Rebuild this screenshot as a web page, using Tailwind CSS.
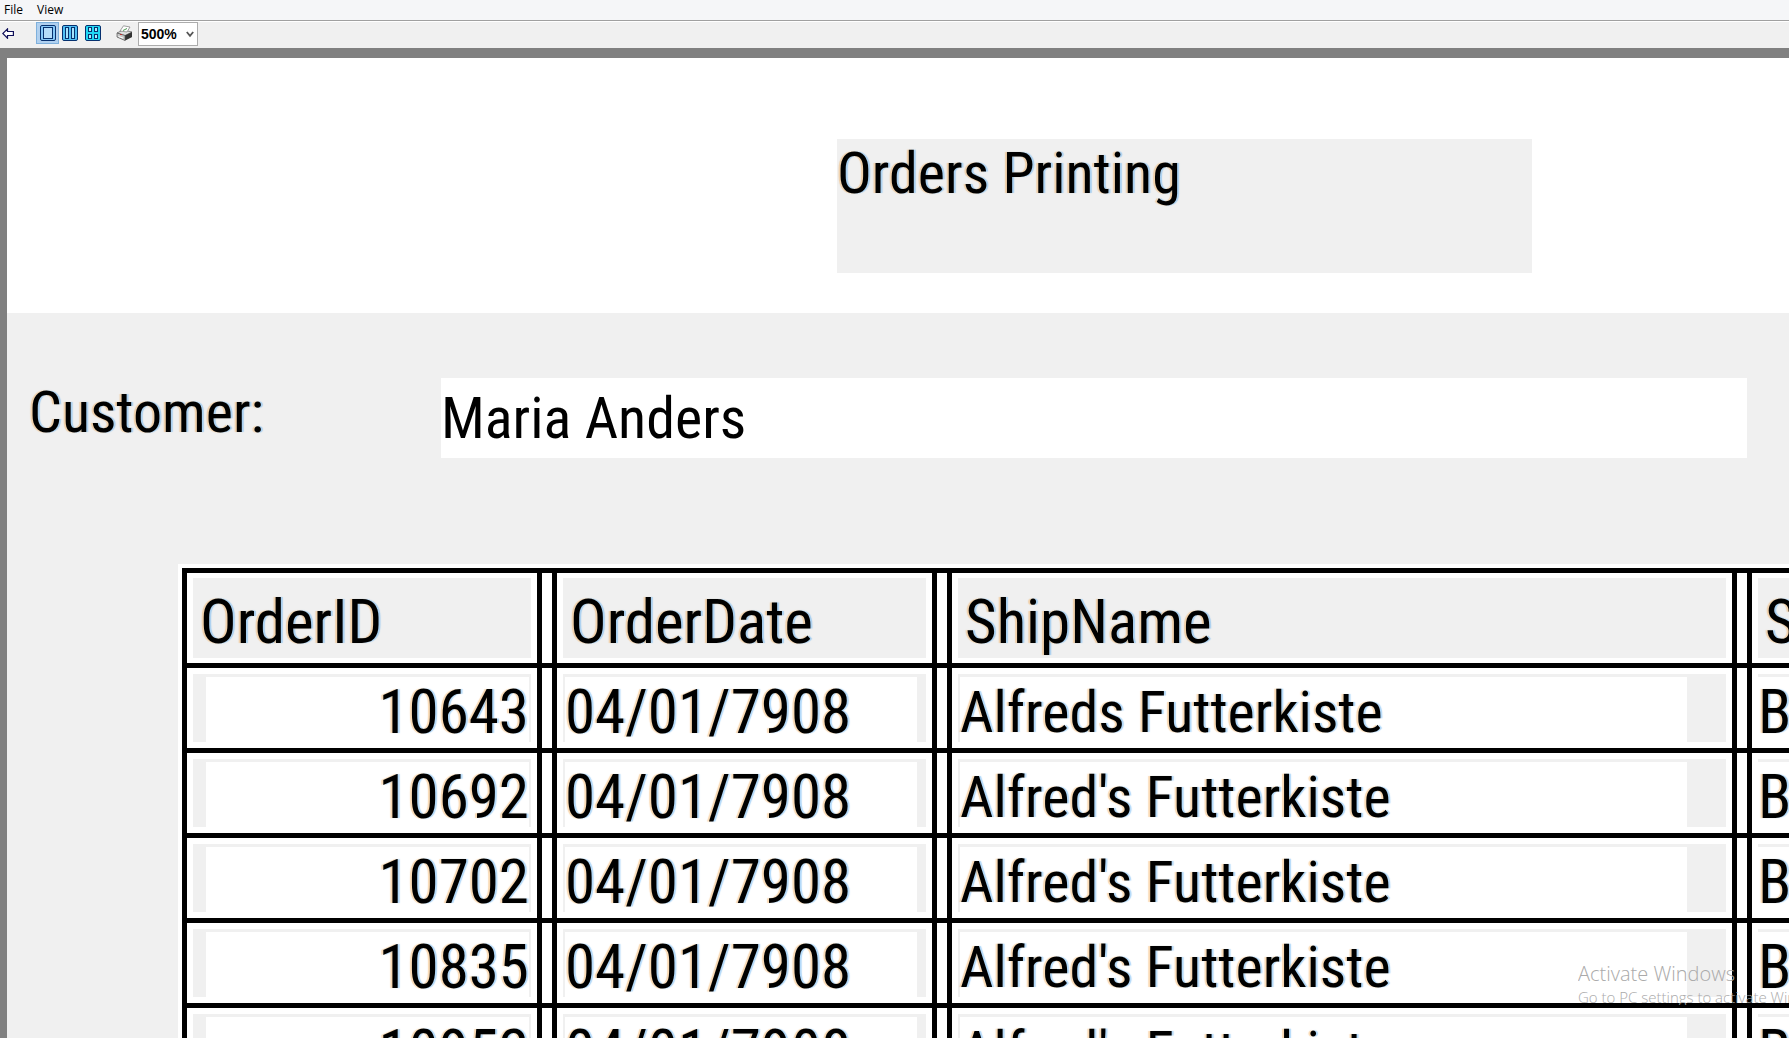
<!DOCTYPE html>
<html lang="en">
<head>
<meta charset="utf-8">
<title>Print Preview</title>
<script src="https://cdn.jsdelivr.net/npm/@tailwindcss/browser@4"></script>
</head>
<body class="flex h-screen flex-col overflow-hidden bg-[#808080] font-['Open_Sans',sans-serif] text-black">
<nav class="flex h-5 shrink-0 items-center gap-[14px] bg-[#f5f6f8] pl-1 text-[12px] leading-5">
  <button class="h-5">File</button>
  <button class="h-5">View</button>
</nav>
<header class="flex h-7 shrink-0 items-start border-t border-[#a0a0a0] bg-[#f0f0f0] pt-px shadow-[inset_0_1px_0_#fff]">
  <button aria-label="Back" class="mr-5 flex h-[22px] w-4 items-center justify-center">
    <svg width="12" height="11" viewBox="0 0 12 11" fill="#fff" stroke="#10105a" stroke-width="1.200"><path d="M5.500.800.800 5.500l4.700 4.700V7.500H11.400V3.500H5.500z"/></svg>
  </button>
  <button aria-label="One page" class="flex h-[22px] w-[23px] items-center justify-center border border-[#7eb0dc] bg-[#b0d0ef]">
    <svg width="16" height="16" viewBox="0 0 16 16" fill="#86c8f8" stroke="#06306e"><rect x=".5" y=".5" width="15" height="15" rx="1.500"/><rect x="3.500" y="2.500" width="9" height="11" fill="#b4dcfa"/></svg>
  </button>
  <button aria-label="Two pages" class="flex h-[22px] w-[22px] items-center justify-center">
    <svg width="16" height="16" viewBox="0 0 16 16" fill="#50c0f4" stroke="#06306e"><rect x=".5" y=".5" width="15" height="15" rx="1.500"/><rect x="3.500" y="2.500" width="3" height="11" fill="#a6e4fc"/><rect x="9.500" y="2.500" width="3" height="11" fill="#a6e4fc"/></svg>
  </button>
  <button aria-label="Four pages" class="flex h-[22px] w-[24px] items-center justify-center">
    <svg width="16" height="16" viewBox="0 0 16 16" fill="#20d8f4" stroke="#06306e"><rect x=".5" y=".5" width="15" height="15" rx="1.500"/><rect x="3.500" y="2.500" width="3" height="4" fill="#a6f0fc"/><rect x="9.500" y="2.500" width="3" height="4" fill="#a6f0fc"/><rect x="3.500" y="9.500" width="3" height="4" fill="#a6f0fc"/><rect x="9.500" y="9.500" width="3" height="4" fill="#a6f0fc"/></svg>
  </button>
  <button aria-label="Print" class="ml-[7px] flex h-[22px] w-6 items-center justify-center">
    <svg width="17" height="16" viewBox="0 0 17 16"><path d="M1 8 7 5l9 2v5l-7 3.500L1 12z" fill="#8a8a8a"/><path d="M1 8l6-3 9 2-7 3.500z" fill="#e0e0e0" stroke="#666" stroke-width=".7"/><path d="M9 10.500 16 7v5l-7 3.500z" fill="#333"/><path d="M1 8l8 2.500v5L1 12z" fill="#c8c8c8" stroke="#555" stroke-width=".7"/><path d="M4 6 7.500.8 14 2l-3 5z" fill="#fff" stroke="#888" stroke-width=".8"/><path d="M7 5.500l4-2" stroke="#4a9a50"/><path d="M4 9.500h2" stroke="#b33"/><path d="M2.500 11.500 7 13" stroke="#fff"/></svg>
  </button>
  <div class="relative ml-[2px]">
    <select aria-label="Zoom" class="block h-6 w-[60px] appearance-none border border-[#acacac] bg-white pl-[2px] font-['Liberation_Sans',sans-serif] text-[14px] leading-5 font-bold"><option>500%</option></select>
    <svg class="pointer-events-none absolute top-[9px] right-1" width="8" height="7" viewBox="0 0 8 7" fill="none" stroke="#555" stroke-width="1.800"><path d="M.8 1 4 4.800 7.200 1"/></svg>
  </div>
</header>
<main class="mt-[10px] ml-[7px] min-h-0 flex-1 overflow-hidden bg-[#f0f0f0] font-['Roboto_Condensed','Liberation_Sans',sans-serif] text-[58px] leading-[68px] [text-shadow:-2px_0_1px_#f0a04066,2px_0_1px_#40a0f066]">
  <div class="h-[255px] bg-white pt-[81px]">
    <h1 class="ml-[830px] h-[134px] w-[695px] bg-[#f0f0f0] font-normal">Orders Printing</h1>
  </div>
  <div class="flex h-[255px] items-start pt-[65px]">
    <label for="customer" class="w-[434px] shrink-0 pl-[22px]">Customer:</label>
    <input id="customer" value="Maria Anders" class="h-20 w-[1306px] shrink-0 bg-white">
  </div>
  <table class="ml-[175px] w-[2165px] table-fixed border-separate border-spacing-0 bg-white text-left shadow-[0_0_0_4px_#fff]">
    <colgroup><col class="w-[370px]"><col class="w-[395px]"><col class="w-[800px]"><col class="w-[600px]"></colgroup>
    <thead class="text-[61px] leading-[68px]"><tr id="head"></tr></thead>
    <tbody id="rows"></tbody>
  </table>
</main>
<aside class="pointer-events-none absolute top-[959px] left-[1578px] w-[211px] overflow-hidden font-light text-[#aaaaaa]">
  <p class="text-[20px] leading-[30px]">Activate Windows</p>
  <p class="text-[15px] leading-4 whitespace-nowrap">Go to PC settings to activate Windows.</p>
</aside>
<script>
const cell = 'border-t-[5px] border-l-[5px] border-black p-0 font-normal';
const frame = 'mr-[10px] border-r-[5px] border-black px-[6px]';
const fields = [
  'ml-[13px] mr-[2px] text-right text-[61px] leading-[70px]',
  'ml-[2px] mr-[9px] text-[61px] leading-[70px]',
  'ml-[2px] mr-[39px] leading-[70px]',
  'text-[61px] leading-[70px]'
];
document.getElementById('head').innerHTML = ['OrderID', 'OrderDate', 'ShipName', 'S'].map(t =>
  `<th scope="col" class="${cell}"><div class="${frame} h-[90px] py-[5px]"><div class="h-20 bg-[#f0f0f0] pt-[10px] pl-[7px]">${t}</div></div></th>`).join('');
const rows = [
  ['10643', "Alfreds Futterkiste"],
  ['10692', "Alfred's Futterkiste"],
  ['10702', "Alfred's Futterkiste"],
  ['10835', "Alfred's Futterkiste"],
  ['10952', "Alfred's Futterkiste"]
];
document.getElementById('rows').innerHTML = rows.map(([id, name]) =>
  '<tr>' + [id, '04/01/7908', name, 'B'].map((t, i) =>
    `<td class="${cell}"><div class="${frame} h-20 py-[6px]"><div class="h-[68px] bg-[#f0f0f0] pt-[3px]"><div class="${fields[i]} h-[65px] bg-white">${t}</div></div></div></td>`).join('') + '</tr>').join('');
</script>
</body>
</html>
